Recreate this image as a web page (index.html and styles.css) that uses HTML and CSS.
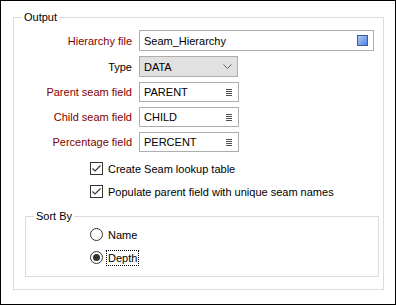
FILE: index.html
```html
<!DOCTYPE html>
<html>
<head>
<meta charset="utf-8">
<link rel="stylesheet" href="styles.css">
</head>
<body>
<div class="window">
  <fieldset class="group output">
    <legend class="legend">Output</legend>
    <div class="form">
      <label class="lbl req">Hierarchy file</label>
      <div class="field wide">
        <span class="val">Seam_Hierarchy</span>
        <svg class="browse" width="11" height="11" viewBox="0 0 11 11">
          <defs><linearGradient id="g" x1="0" y1="0" x2="1" y2="1"><stop offset="0" stop-color="#b5cdf8"/><stop offset="1" stop-color="#4a7fe0"/></linearGradient></defs>
          <rect x="0.5" y="0.5" width="10" height="10" fill="url(#g)" stroke="#3e5c8e"/>
        </svg>
      </div>
      <label class="lbl">Type</label>
      <div class="field combo">
        <span class="val">DATA</span>
        <svg class="chev" width="9" height="5" viewBox="0 0 9 5"><path d="M0.5 0.5 L4.5 4.5 L8.5 0.5" fill="none" stroke="#606060"/></svg>
      </div>
      <label class="lbl req">Parent seam field</label>
      <div class="field short">
        <span class="val">PARENT</span>
        <svg class="list" width="6" height="7" viewBox="0 0 6 7"><path d="M0 0.5H6M0 2.5H6M0 4.5H6M0 6.5H6" stroke="#505050"/></svg>
      </div>
      <label class="lbl req">Child seam field</label>
      <div class="field short">
        <span class="val">CHILD</span>
        <svg class="list" width="6" height="7" viewBox="0 0 6 7"><path d="M0 0.5H6M0 2.5H6M0 4.5H6M0 6.5H6" stroke="#505050"/></svg>
      </div>
      <label class="lbl req">Percentage field</label>
      <div class="field short">
        <span class="val">PERCENT</span>
        <svg class="list" width="6" height="7" viewBox="0 0 6 7"><path d="M0 0.5H6M0 2.5H6M0 4.5H6M0 6.5H6" stroke="#505050"/></svg>
      </div>
    </div>
    <div class="checks">
      <div class="opt">
        <span class="box"><svg width="11" height="11" viewBox="0 0 11 11"><path d="M1.5 5.5 L4 8 L9.5 2.5" fill="none" stroke="#333" stroke-width="1.1"/></svg></span>
        <span class="txt">Create Seam lookup table</span>
      </div>
      <div class="opt">
        <span class="box"><svg width="11" height="11" viewBox="0 0 11 11"><path d="M1.5 5.5 L4 8 L9.5 2.5" fill="none" stroke="#333" stroke-width="1.1"/></svg></span>
        <span class="txt">Populate parent field with unique seam names</span>
      </div>
    </div>
    <fieldset class="group sort">
      <legend class="legend">Sort By</legend>
      <div class="radios">
        <div class="opt">
          <span class="radio"></span>
          <span class="txt">Name</span>
        </div>
        <div class="opt">
          <span class="radio on"></span>
          <span class="txt focus">Depth</span>
        </div>
      </div>
    </fieldset>
  </fieldset>
</div>
</body>
</html>
```
FILE: styles.css
```css
html, body {
  margin: 0;
  padding: 0;
  background: #fff;
}
body {
  font-family: "Liberation Sans", Arial, sans-serif;
  font-size: 11px;
  color: #000;
}
.window {
  width: 396px;
  height: 305px;
  box-sizing: border-box;
  border: 1px solid #000;
  background: #fff;
  padding: 9px 0 0 12px;
}
.group {
  margin: 0;
  padding: 0;
  border: 1px solid #dcdcdc;
  min-width: 0;
}
.legend {
  padding: 0 2px;
  line-height: 14px;
  height: 14px;
}
.output {
  width: 371px;
  height: 280px;
  box-sizing: border-box;
}
.output > .legend {
  margin-left: 8px;
}
.form {
  display: grid;
  grid-template-columns: 118px auto;
  column-gap: 7px;
  row-gap: 5px;
  margin-top: 6px;
  justify-items: start;
  align-items: center;
}
.lbl {
  justify-self: end;
  line-height: 14px;
}
.req {
  color: #800000;
}
.field {
  box-sizing: border-box;
  width: 100px;
  height: 21px;
  border: 1px solid #adadad;
  background: #fff;
  display: flex;
  align-items: center;
  padding: 0 6px 0 4px;
}
.field.short {
  height: 20px;
}
.field.wide {
  width: 235px;
}
.field.combo {
  background: #e1e1e1;
  width: 99px;
  padding-right: 5px;
}
.val {
  flex: 1;
  line-height: 14px;
}
.browse {
  display: block;
  margin-right: -1px;
}
.chev {
  display: block;
}
.list {
  display: block;
}
.checks {
  display: flex;
  flex-direction: column;
  gap: 10px;
  margin: 10px 0 0 76px;
}
.opt {
  display: flex;
  align-items: center;
  gap: 5px;
  height: 13px;
}
.box {
  box-sizing: border-box;
  width: 13px;
  height: 13px;
  border: 1px solid #333;
  background: #fff;
  display: flex;
}
.box svg {
  display: block;
}
.txt {
  line-height: 14px;
}
.sort {
  width: 354px;
  height: 68px;
  box-sizing: border-box;
  margin: 11px 0 0 11px;
}
.sort > .legend {
  margin-left: 8px;
}
.radios {
  display: flex;
  flex-direction: column;
  gap: 10px;
  margin: 5px 0 0 64px;
}
.radio {
  box-sizing: border-box;
  width: 13px;
  height: 13px;
  border: 1px solid #333;
  border-radius: 50%;
  background: #fff;
  display: flex;
  align-items: center;
  justify-content: center;
}
.radio.on::after {
  content: "";
  width: 7px;
  height: 7px;
  border-radius: 50%;
  background: #333;
}
.focus {
  outline: 1px dotted #000;
  outline-offset: 0;
  padding: 0 1px;
  margin-left: -1px;
}
```
